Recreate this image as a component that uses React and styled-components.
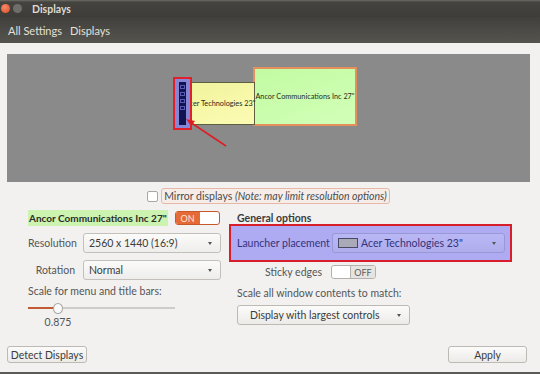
import React from 'react'
import styled, { createGlobalStyle } from 'styled-components'

const Global = createGlobalStyle`
  html, body { margin: 0; padding: 0; }
  body { font-family: Lato, "Open Sans", "DejaVu Sans", sans-serif; font-size: 10.5px; color: #4c4c4c; }
`

const Window = styled.div`
  width: 540px;
  height: 374px;
  display: flex;
  flex-direction: column;
  background: #f2f1f0;
  box-sizing: border-box;
  border-bottom: 2px solid #5b5a56;
  overflow: hidden;
`

const TitleBar = styled.div`
  height: 17px;
  display: flex;
  align-items: center;
  gap: 3px;
  padding-left: 1px;
  background: linear-gradient(#6e6d68 0, #45443f 2px, #3d3c38 100%);
  color: #dfdbd2;
  font-weight: bold;
  font-size: 10.5px;
`

const WinDot = styled.span`
  width: 9px;
  height: 9px;
  border-radius: 50%;
  background: ${p => (p.$close ? 'radial-gradient(circle at 40% 35%, #f7896a, #dd4a22)' : '#6f6e69')};
  margin-right: ${p => (p.$close ? '0' : '7px')};
`

const Toolbar = styled.div`
  height: 26px;
  display: flex;
  align-items: center;
  gap: 8px;
  padding-left: 8px;
  background: linear-gradient(#403f3b, #4d4c47 60%, #54534e);
  color: #e4e1da;
  font-size: 11px;
`

const Body = styled.div`
  flex: 1;
  display: flex;
  flex-direction: column;
  padding: 11px 10px 9px 7px;
`

const Canvas = styled.div`
  position: relative;
  height: 128px;
  background: #8a8a8a;
  overflow: hidden;
`

const Monitor = styled.div`
  position: absolute;
  left: ${p => p.$x}px;
  top: ${p => p.$y}px;
  width: ${p => p.$w}px;
  height: ${p => p.$h}px;
  box-sizing: border-box;
  display: flex;
  align-items: center;
  justify-content: center;
  white-space: nowrap;
  font-size: 7.3px;
  color: #2a2a20;
  background: ${p => p.$bg};
  border: ${p => p.$border};
`

const LauncherMark = styled.div`
  position: absolute;
  left: 166px;
  top: 23px;
  width: 19px;
  height: 53px;
  box-sizing: border-box;
  border: 2px solid #e0202a;
  background: #8686d6;
  display: flex;
  padding: 3px 4px 3px 4px;
`

const LauncherStrip = styled.div`
  width: 7px;
  background: #101450;
  display: flex;
  flex-direction: column;
  align-items: center;
  gap: 3px;
  padding-top: 3px;
`

const LauncherIcon = styled.span`
  width: 5px;
  height: 4px;
  border: 1px solid #5a5ab0;
  box-sizing: border-box;
`

const Arrow = styled.svg`
  position: absolute;
  left: 0;
  top: 0;
`

const MirrorRow = styled.div`
  display: flex;
  justify-content: center;
  align-items: center;
  gap: 3px;
  margin-top: 6px;
  height: 16px;
`

const Check = styled.span`
  width: 9px;
  height: 9px;
  border: 1px solid #aaa7a2;
  border-radius: 2px;
  background: #fff;
`

const MirrorLabel = styled.span`
  border: 1px solid #e6b8a8;
  background: #f6ece8;
  border-radius: 3px;
  padding: 1px 2px;
  color: #4c4c4c;
  em { font-style: italic; }
`

const Columns = styled.div`
  display: grid;
  grid-template-columns: 193px 275px;
  column-gap: 16px;
  margin-left: 21px;
  margin-top: 5px;
`

const Column = styled.div`
  display: flex;
  flex-direction: column;
`

const HeadRow = styled.div`
  height: 18px;
  display: flex;
  align-items: center;
  gap: 7px;
`

const MonitorName = styled.span`
  background: #cdf3b0;
  font-weight: bold;
  color: #2c2c2c;
  padding: 2px 1px;
  font-size: 10px;
  white-space: nowrap;
`

const Toggle = styled.span`
  width: 45px;
  height: 14px;
  display: flex;
  box-sizing: border-box;
  border: 1px solid ${p => (p.$on ? '#c8572a' : '#b4b1ac')};
  border-radius: 3px;
  overflow: hidden;
  background: #fff;
  flex-direction: ${p => (p.$on ? 'row' : 'row-reverse')};
`

const ToggleLabel = styled.span`
  width: 24px;
  display: flex;
  align-items: center;
  justify-content: center;
  font-size: 9px;
  color: ${p => (p.$on ? '#fbe6dc' : '#5c5c5c')};
  background: ${p => (p.$on ? '#e56a36' : '#e6e4e0')};
  border-left: ${p => (p.$on ? 'none' : '1px solid #b4b1ac')};
`

const FieldRow = styled.div`
  display: flex;
  align-items: center;
  gap: ${p => p.$gap || 8}px;
  height: 20px;
  margin-top: ${p => p.$mt || 0}px;
`

const Label = styled.span`
  width: ${p => p.$w}px;
  text-align: ${p => p.$align || 'right'};
  color: ${p => p.$color || '#555'};
  white-space: nowrap;
`

const Dropdown = styled.div`
  width: ${p => p.$w}px;
  height: 20px;
  box-sizing: border-box;
  display: flex;
  align-items: center;
  gap: 3px;
  padding: 0 8px 0 5px;
  border: 1px solid ${p => (p.$tint ? '#9997d8' : '#c3c0bb')};
  border-radius: 3px;
  background: ${p => (p.$tint ? 'linear-gradient(#b9b7f4, #afadec)' : 'linear-gradient(#fbfbfa, #eeedeb)')};
  color: ${p => (p.$tint ? '#33337a' : '#3c3c3c')};
  white-space: nowrap;
`

const DropText = styled.span`
  flex: 1;
`

const Caret = styled.span`
  width: 0;
  height: 0;
  border-left: 2.5px solid transparent;
  border-right: 2.5px solid transparent;
  border-top: 3px solid #555;
`

const Swatch = styled.span`
  width: 20px;
  height: 10px;
  box-sizing: border-box;
  border: 1px solid #4a4a66;
  background: #a9a9b8;
`

const Caption = styled.div`
  margin-top: ${p => p.$mt || 5}px;
  height: 14px;
  line-height: 14px;
  color: #555;
`

const Heading = styled.div`
  height: 15px;
  line-height: 19px;
  font-weight: bold;
  color: #3c3c3c;
`

const Highlight = styled.div`
  margin-left: -8px;
  height: 38px;
  box-sizing: border-box;
  border: 2px solid #d81e2a;
  background: #aeabf2;
  display: flex;
  align-items: center;
  padding: 0 5px 0 6px;
  gap: 10px;
`

const SliderTrack = styled.div`
  margin-top: 9px;
  width: 147px;
  height: 2px;
  background: #cfcdc9;
  position: relative;
`

const SliderFill = styled.div`
  height: 2px;
  background: #c25a33;
`

const SliderKnob = styled.span`
  position: absolute;
  top: -4px;
  width: 8px;
  height: 9px;
  margin-left: -4px;
  border-radius: 50%;
  background: #fafafa;
  border: 1px solid #a9a6a1;
`

const SliderValue = styled.div`
  margin-top: 7px;
  width: 60px;
  text-align: center;
  color: #555;
`

const Button = styled.div`
  width: ${p => p.$w}px;
  height: ${p => p.$h || 17}px;
  box-sizing: border-box;
  display: flex;
  align-items: center;
  justify-content: ${p => p.$between ? 'space-between' : 'center'};
  padding: ${p => p.$between ? '0 8px 0 12px' : '0'};
  border: 1px solid #bdbab5;
  border-radius: 3px;
  background: linear-gradient(#fbfbfa, #ecebe8);
  color: #3c3c3c;
  white-space: nowrap;
`

const Footer = styled.div`
  margin-top: auto;
  display: flex;
  justify-content: space-between;
  padding-right: 3px;
`

export default function App() {
  const scale = 0.2
  return (
    <Window>
      <Global />
      <TitleBar>
        <WinDot $close />
        <WinDot />
        Displays
      </TitleBar>
      <Toolbar>
        <span>All Settings</span>
        <span>Displays</span>
      </Toolbar>
      <Body>
        <Canvas>
          <Monitor $x={246} $y={13} $w={104} $h={59} $bg="linear-gradient(160deg, #c2fba2, #d2ffb8)" $border="2px solid #e58f5c">
            Ancor Communications Inc 27"
          </Monitor>
          <Monitor $x={178} $y={28} $w={70} $h={43} $bg="linear-gradient(160deg, #f2f39c, #fbfcb4)" $border="1px solid #5e5e40">
            Acer Technologies 23"
          </Monitor>
          <LauncherMark>
            <LauncherStrip>
              <LauncherIcon />
              <LauncherIcon />
              <LauncherIcon />
              <LauncherIcon />
            </LauncherStrip>
          </LauncherMark>
          <Arrow width="523" height="128">
            <line x1="219" y1="92" x2="183" y2="68" stroke="#dd1e26" strokeWidth="1.6" />
            <polygon points="179,65 188,67 184,72" fill="#dd1e26" />
          </Arrow>
        </Canvas>
        <MirrorRow>
          <Check />
          <MirrorLabel>Mirror displays <em>(Note: may limit resolution options)</em></MirrorLabel>
        </MirrorRow>
        <Columns>
          <Column>
            <HeadRow>
              <MonitorName>Ancor Communications Inc 27"</MonitorName>
              <Toggle $on>
                <ToggleLabel $on>ON</ToggleLabel>
              </Toggle>
            </HeadRow>
            <FieldRow $mt={6} $gap={8}>
              <Label $w={47}>Resolution</Label>
              <Dropdown $w={138}>
                <DropText>2560 x 1440 (16:9)</DropText>
                <Caret />
              </Dropdown>
            </FieldRow>
            <FieldRow $mt={7} $gap={8}>
              <Label $w={47}>Rotation</Label>
              <Dropdown $w={138}>
                <DropText>Normal</DropText>
                <Caret />
              </Dropdown>
            </FieldRow>
            <Caption $mt={4}>Scale for menu and title bars:</Caption>
            <SliderTrack>
              <SliderFill style={{ width: `${scale * 100}%` }} />
              <SliderKnob style={{ left: `${scale * 100}%` }} />
            </SliderTrack>
            <SliderValue>0.875</SliderValue>
          </Column>
          <Column>
            <Heading>General options</Heading>
            <Highlight>
              <Label $w={85} $align="left" $color="#34347c">Launcher placement</Label>
              <Dropdown $w={173} $tint>
                <Swatch />
                <DropText>Acer Technologies 23"</DropText>
                <Caret />
              </Dropdown>
            </Highlight>
            <FieldRow $gap={9}>
              <Label $w={85}>Sticky edges</Label>
              <Toggle>
                <ToggleLabel>OFF</ToggleLabel>
              </Toggle>
            </FieldRow>
            <Caption $mt={4}>Scale all window contents to match:</Caption>
            <FieldRow $mt={5}>
              <Button $w={173} $h={20} $between>
                <span>Display with largest controls</span>
                <Caret />
              </Button>
            </FieldRow>
          </Column>
        </Columns>
        <Footer>
          <Button $w={80}>Detect Displays</Button>
          <Button $w={79}>Apply</Button>
        </Footer>
      </Body>
    </Window>
  )
}
